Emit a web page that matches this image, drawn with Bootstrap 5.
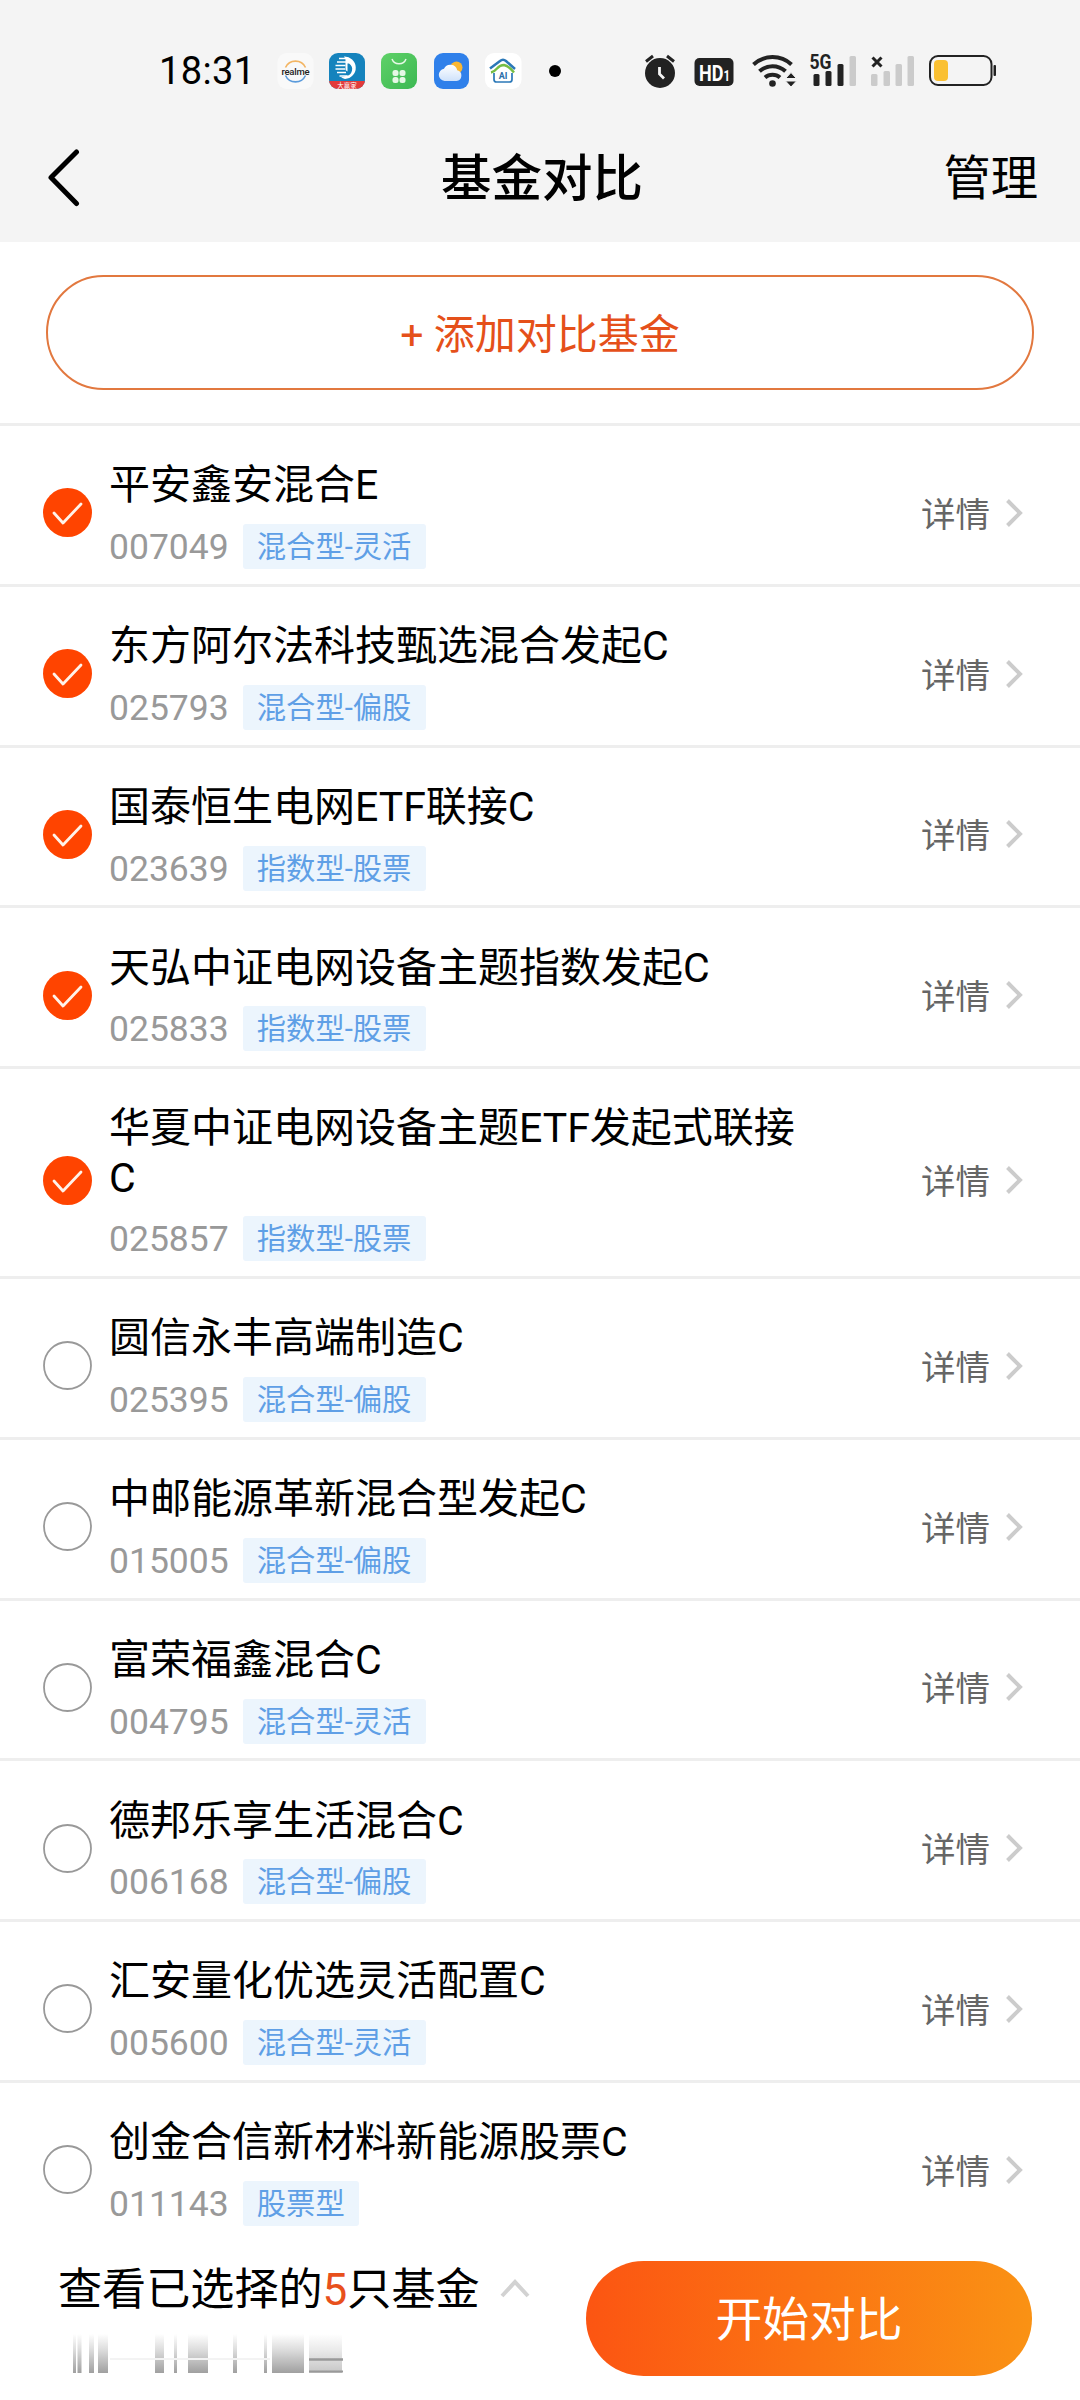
<!DOCTYPE html>
<html lang="zh-CN">
<head>
<meta charset="utf-8">
<meta name="viewport" content="width=device-width, initial-scale=1">
<title>基金对比</title>
<link rel="stylesheet" href="https://cdn.jsdelivr.net/npm/bootstrap@5.3.0/dist/css/bootstrap.min.css">
<style>
body{font-family:Roboto,"Noto Sans CJK SC",sans-serif;color:#000;background:#fff;width:1080px;height:2400px;overflow:hidden}
svg{display:block;flex:none}
.top-area{background:#f4f4f4;height:242px}
.status-bar{height:112px;padding:51px 84px 0 159px}
.clock{font-size:38px;line-height:40px;width:115px;letter-spacing:.4px;flex:none}
.title-bar{height:130px;padding:3px 42px 0 46px}
.title-text{font-size:50.5px;font-weight:500;line-height:60px}
.manage{font-size:47.3px;line-height:60px}
.side{width:200px}
.add-wrap{height:181px;padding:33px 46px 0}
.add-btn{height:115px;border:2px solid #e2783f;color:#e5501a;font-size:41px;line-height:60px;background:#fff;padding-top:4px}
.fund{height:160.75px;border-top:3px solid #eee;padding:35.3px 56px 0 43px}
.fund.tall{height:210px}
.pick{margin:0 17px 5px 0}
.fund-name{font-size:41px;line-height:49.25px;width:700px}
.fund-meta{margin-top:13.7px;height:45px}
.code{font-size:35.5px;line-height:47px;color:#999;width:133.5px}
.kind{background:#ecf5fd;color:#5f9fe6;font-size:29.3px;line-height:47px;height:45px;padding:0 14.3px;border-radius:3px}
.detail{color:#666;font-size:34.5px;line-height:45px;margin-bottom:5px}
.detail span{padding-top:5px}
.foot{height:160px;padding:20px 48px 0 58px;background:#fff}
.foot-text{font-size:44.1px;line-height:56px;padding-top:1px}
.foot-text b{font-weight:400;color:#e8501c}
.go{width:446px;height:115px;background:linear-gradient(90deg,#fc5512,#fa9214);font-size:46.8px;color:#fff;padding-top:5px}
</style>
</head>
<body>
<header class="top-area">
  <div class="status-bar d-flex align-items-start">
    <div class="clock">18:31</div>
    <svg width="290" height="40" viewBox="0 0 290 40">
      <defs>
        <linearGradient id="gr" x2="1" y2="1"><stop stop-color="#5fd168"/><stop offset="1" stop-color="#3cb852"/></linearGradient>
        <linearGradient id="cl" x2="0" y2="1"><stop stop-color="#fff"/><stop offset="1" stop-color="#cfe2fb"/></linearGradient>
        <clipPath id="rc"><rect x="51" y="2" width="36" height="36" rx="9"/></clipPath>
      </defs>
      <g transform="translate(3 0)">
        <rect x=".5" y="2" width="36" height="36" rx="9" fill="#f9f9f9"/>
        <path d="M8.500 16.500a11 11 0 0 1 20 0" fill="none" stroke="#f3b563" stroke-width="1.600"/>
        <path d="M8.500 24.500a11 11 0 0 0 20 0" fill="none" stroke="#5b9bdc" stroke-width="1.600"/>
        <text x="18.500" y="23.500" font-size="9.500" font-weight="500" text-anchor="middle" fill="#222" textLength="28">realme</text>
      </g>
      <g transform="translate(4 0)">
        <g clip-path="url(#rc)"><rect x="51" y="2" width="36" height="36" fill="#1583bd"/><rect x="51" y="30" width="36" height="8" fill="#e23a3a"/></g>
        <path d="M66 5.500A11 11 0 1 1 67 28l-4-1.500 5-1.500a6.800 6.800 0 0 0 3-12.500l-1.500 0v8l-2-1.500v-9.500q0-2-1.500-4z" fill="#fff"/>
        <path d="M61 7.500h8M59 11h9M57.500 14.500h10M57.500 18h9.500M59 21.500h9M61.500 25h8" stroke="#fff" stroke-width="1.600"/>
        <text x="69" y="36.800" font-size="6.500" text-anchor="middle" fill="#fff">大赢家</text>
      </g>
      <g transform="translate(5 0)">
        <rect x="102" y="2" width="36" height="36" rx="9" fill="url(#gr)"/>
        <path d="M113 8a7.500 7.500 0 0 0 14 0" fill="none" stroke="#e8f9e8" stroke-width="1.500"/>
        <g fill="#e6f8e5"><rect x="113.500" y="19" width="6" height="6" rx="2.500"/><rect x="120.500" y="19" width="6" height="6" rx="2.500"/><rect x="113.500" y="26" width="6" height="6" rx="2.500"/><rect x="120.500" y="26" width="6" height="6" rx="2.500"/></g>
      </g>
      <g transform="translate(6.500 0)">
        <rect x="153.500" y="2" width="35" height="36" rx="9" fill="#2f80ea"/>
        <circle cx="176" cy="16.500" r="6" fill="#fbb731"/>
        <path d="M164 30a6.200 6.200 0 0 1-.5-12.300 7 7 0 0 1 13.200 1.500A5.500 5.500 0 0 1 176 30z" fill="url(#cl)"/>
      </g>
      <g transform="translate(7 0)">
        <rect x="204" y="2" width="36.500" height="36" rx="9" fill="#fff"/>
        <path d="M209 17.500l10-7.500q3-2.500 6 0l9 8" fill="none" stroke="#2b78b8" stroke-width="2.500"/>
        <path d="M210 21.500q3-.5 6-4t7-3.500q5 1 10 7.500" fill="none" stroke="#76bd45" stroke-width="2.400"/>
        <path d="M213 22v6.500q0 2.500 2.500 2.500H228.500q2.500 0 2.500-2.500v-6.500" fill="none" stroke="#2b78b8" stroke-width="1.700"/>
        <text x="222" y="28" font-size="9" font-weight="700" text-anchor="middle" fill="#2b6ca8">AI</text>
      </g>
      <circle cx="281" cy="20" r="6" fill="#000"/>
    </svg>
    <svg class="ms-auto" width="356" height="40" viewBox="640 51 356 40">
      <g fill="#222">
        <circle cx="660" cy="73" r="15"/>
        <path d="M646 61.500l7-5.500M674 61.500l-7-5.500" stroke="#222" stroke-width="3"/>
        <path d="M659.500 67v7l4.500 4.500" stroke="#f4f4f4" stroke-width="2.800" fill="none"/>
        <rect x="694.500" y="58" width="39" height="28" rx="5"/>
        <circle cx="772.500" cy="83.500" r="3.300"/>
        <g fill="none" stroke="#222" stroke-width="4"><path d="M753.500 64.500a28 28 0 0 1 38 0"/><path d="M759.500 71.300a19 19 0 0 1 26 0"/><path d="M765 77.500a11.500 11.500 0 0 1 15 0"/></g>
        <path d="M785.500 78.500l5.500-6 5.500 6zM785.500 81l5.500 6 5.500-6z" stroke="#f4f4f4" stroke-width="1"/>
        <rect x="813.500" y="74" width="6" height="12" rx="1.500"/><rect x="825.500" y="71" width="6" height="15" rx="1.500"/><rect x="837.500" y="64" width="6" height="22" rx="1.500"/>
        <path d="M872.500 57.500l9 9M881.500 57.500l-9 9" stroke="#222" stroke-width="3"/>
      </g>
      <g fill="#cbcbcb"><rect x="849.500" y="56" width="6.500" height="30" rx="1.500"/><rect x="871" y="74" width="6.500" height="12" rx="1.500"/><rect x="883.500" y="71" width="6.500" height="15" rx="1.500"/><rect x="895.500" y="64" width="6.500" height="22" rx="1.500"/><rect x="907.500" y="56" width="6.500" height="30" rx="1.500"/></g>
      <text x="699" y="80.500" font-size="22" font-weight="700" fill="#fff" textLength="31" lengthAdjust="spacingAndGlyphs">HD<tspan font-size="14">1</tspan></text>
      <text x="809.500" y="69" font-size="20.500" font-weight="700" fill="#222" stroke="#f4f4f4" stroke-width="3" paint-order="stroke" textLength="22" lengthAdjust="spacingAndGlyphs">5G</text>
      <rect x="930" y="56" width="61.500" height="29" rx="8" fill="none" stroke="#222" stroke-width="2"/>
      <rect x="934" y="60" width="14" height="21" rx="4" fill="#fac032"/>
      <rect x="993.500" y="65" width="2.500" height="11" rx="1" fill="#222"/>
    </svg>
  </div>
  <div class="title-bar d-flex justify-content-between align-items-center">
    <div class="side"><svg width="36" height="60" viewBox="0 0 36 60"><path d="M30.500 3L5 28.500l25.500 26" fill="none" stroke="#000" stroke-width="5" stroke-linecap="round" stroke-linejoin="round"/></svg></div>
    <div class="title-text">基金对比</div>
    <div class="side manage text-end">管理</div>
  </div>
</header>
<main>
  <div class="add-wrap"><div class="add-btn rounded-pill d-flex align-items-center justify-content-center">+ 添加对比基金</div></div>
  <div id="list"></div>
</main>
<footer class="foot d-flex justify-content-between">
  <div>
    <div class="d-flex align-items-center foot-text"><span>查看已选择的<b>5</b>只基金</span>
      <svg width="32" height="22" viewBox="0 0 32 22" style="margin-left:19px"><path d="M3 17L16 3l13 14" fill="none" stroke="#d2d2d2" stroke-width="4"/></svg></div>
    <svg width="300" height="42" viewBox="58 2334 300 42" style="margin-top:16px">
      <defs><linearGradient id="fade" gradientUnits="userSpaceOnUse" x1="0" y1="2334" x2="0" y2="2373"><stop stop-color="#777" stop-opacity="0"/><stop offset=".4" stop-color="#777" stop-opacity=".25"/><stop offset="1" stop-color="#777" stop-opacity=".7"/></linearGradient></defs>
      <g fill="url(#fade)"><path d="M73 2334h3v39h-3zM77.500 2334h4v39h-4zM89 2334h5v39h-5zM98 2334h10v39H98zM155 2334h9v39h-9zM174 2334h3v39h-3zM188 2334h20v39h-20zM233 2334h4v39h-4zM264 2334h3v39h-3zM272 2334h32v39h-32z"/><path d="M309 2334h33v39h-33z" opacity=".6"/></g>
      <path d="M110 2359h160" stroke="#f3f3f3" stroke-width="2"/><path d="M309 2359.500h34" stroke="#999" stroke-width="2.500"/><path d="M309 2371.500h34" stroke="#999" stroke-width="2"/>
    </svg>
  </div>
  <div class="go rounded-pill d-flex align-items-center justify-content-center">开始对比</div>
</footer>
<script>
const funds=[["平安鑫安混合E","007049","混合型-灵活",1],["东方阿尔法科技甄选混合发起C","025793","混合型-偏股",1],["国泰恒生电网ETF联接C","023639","指数型-股票",1],["天弘中证电网设备主题指数发起C","025833","指数型-股票",1],["华夏中证电网设备主题ETF发起式联接C","025857","指数型-股票",1],["圆信永丰高端制造C","025395","混合型-偏股",0],["中邮能源革新混合型发起C","015005","混合型-偏股",0],["富荣福鑫混合C","004795","混合型-灵活",0],["德邦乐享生活混合C","006168","混合型-偏股",0],["汇安量化优选灵活配置C","005600","混合型-灵活",0],["创金合信新材料新能源股票C","011143","股票型",0]];
const on='<circle cx="24.500" cy="24.500" r="24.500" fill="#ff4400"/><path d="M11 25l9 10 18-19" fill="none" stroke="#fff3ea" stroke-width="2.800" stroke-linecap="round" stroke-linejoin="round"/>';
const off='<circle cx="24.500" cy="24.500" r="23.500" fill="none" stroke="#999" stroke-width="1.800"/>';
document.getElementById("list").innerHTML=funds.map((f,i)=>`<div class="fund ${i==4?"tall":""} d-flex align-items-start"><div class="d-flex align-items-center w-100">
<svg class="pick" width="49" height="49" viewBox="0 0 49 49">${f[3]?on:off}</svg>
<div><div class="fund-name">${f[0]}</div><div class="fund-meta d-flex"><span class="code">${f[1]}</span><span class="kind">${f[2]}</span></div></div>
<div class="detail d-flex align-items-center ms-auto"><span>详情</span><svg width="20" height="32" viewBox="0 0 20 32" style="margin-left:14px"><path d="M3.500 3.500L16 16 3.500 28.500" fill="none" stroke="#ccc" stroke-width="4"/></svg></div>
</div></div>`).join("");
</script>
<script src="https://cdn.jsdelivr.net/npm/bootstrap@5.3.0/dist/js/bootstrap.bundle.min.js"></script>
</body>
</html>
